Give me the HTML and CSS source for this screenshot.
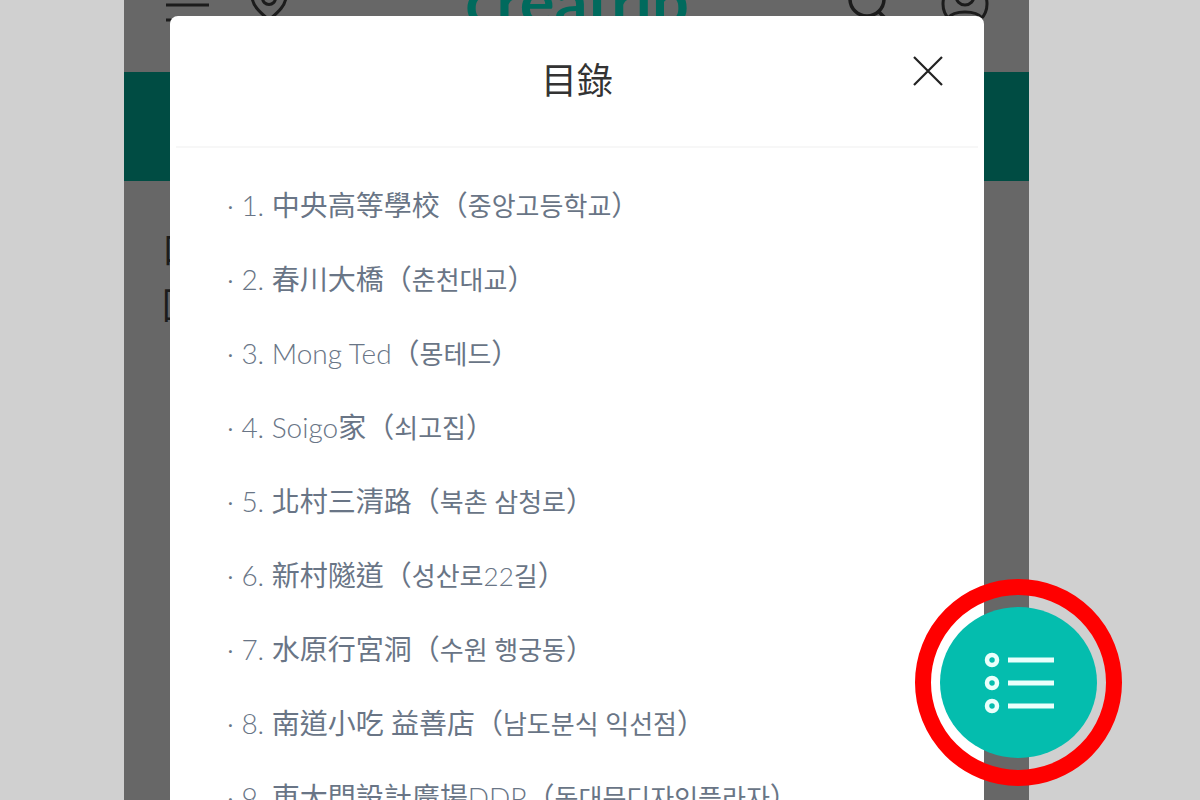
FILE: index.html
```html
<!DOCTYPE html>
<html lang="zh-Hant">
<head>
<meta charset="utf-8">
<meta name="viewport" content="width=device-width, initial-scale=1">
<title>目錄</title>
<link rel="stylesheet" href="styles.css">
</head>
<body>
<div class="stage">
  <main class="screen">
    <header class="topbar">
      <svg class="topbar-icon" viewBox="0 0 44 44" fill="none" stroke="#1c1c1c" stroke-width="3"><path d="M0 12H43M0 27H43M0 42H43"/></svg>
      <svg class="topbar-icon pin" viewBox="0 0 44 44" fill="none" stroke="#1c1c1c" stroke-width="3"><path d="M22 42C14 35 5 28 5 18C5 8 12 1 22 1S39 8 39 18C39 28 30 35 22 42Z"/><circle cx="22" cy="20" r="6.500"/></svg>
      <span class="logo">creatrip</span>
      <svg class="topbar-icon search" viewBox="0 0 44 44" fill="none" stroke="#1c1c1c" stroke-width="3.500"><circle cx="22" cy="21" r="17"/><path d="M33 33L42 42"/></svg>
      <svg class="topbar-icon user" viewBox="0 0 48 52" fill="none" stroke="#1c1c1c" stroke-width="3"><circle cx="24" cy="30" r="22"/><circle cx="24" cy="22" r="9"/><path d="M7 44C13 36 35 36 41 44"/></svg>
    </header>
    <div class="banner"></div>
    <div class="article"><p>口</p><p>回</p></div>

    <section class="modal" role="dialog" aria-labelledby="toc-title">
      <div class="modal-head">
        <h1 class="modal-title" id="toc-title">目錄</h1>
        <button class="close" type="button" aria-label="關閉">
          <svg viewBox="0 0 30 30" fill="none" stroke="#222" stroke-width="2.200"><path d="M1 1L29 29M29 1L1 29"/></svg>
        </button>
      </div>
      <ul class="toc">
        <li><span class="latin">· 1. </span>中央高等學校（<span class="ko" lang="ko">중앙고등학교</span>）</li>
        <li><span class="latin">· 2. </span>春川大橋（<span class="ko" lang="ko">춘천대교</span>）</li>
        <li><span class="latin">· 3. Mong Ted</span>（<span class="ko" lang="ko">몽테드</span>）</li>
        <li><span class="latin">· 4. Soigo</span>家（<span class="ko" lang="ko">쇠고집</span>）</li>
        <li><span class="latin">· 5. </span>北村三清路（<span class="ko" lang="ko">북촌 삼청로</span>）</li>
        <li><span class="latin">· 6. </span>新村隧道（<span class="ko" lang="ko">성산로<span class="latin">22</span>길</span>）</li>
        <li><span class="latin">· 7. </span>水原行宮洞（<span class="ko" lang="ko">수원 행궁동</span>）</li>
        <li><span class="latin">· 8. </span>南道小吃 益善店（<span class="ko" lang="ko">남도분식 익선점</span>）</li>
        <li><span class="latin">· 9. </span>東大門設計廣場<span class="latin">DDP</span>（<span class="ko" lang="ko">동대문디자인플라자</span>）</li>
      </ul>
    </section>
  </main>

  <div class="ring">
    <button class="fab" type="button" aria-label="目錄">
      <svg viewBox="0 0 72 64" fill="none" stroke="#eafffb"><g stroke-width="4.500"><circle cx="9" cy="9" r="5"/><circle cx="9" cy="32" r="5"/><circle cx="9" cy="55" r="5"/></g><path stroke-width="5" d="M25 9H71M25 32H71M25 55H71"/></svg>
    </button>
  </div>
</div>
</body>
</html>
```
FILE: styles.css
```css
* {
  box-sizing: border-box;
}

body {
  margin: 0;
  background: #d0d0d0;
  font-family: Lato, "Noto Sans CJK TC", sans-serif;
}

.stage {
  display: flow-root;
  position: relative;
  height: 100vh;
  padding: 0 171px 0 124px;
  overflow: hidden;
}

.screen {
  display: flow-root;
  position: relative;
  height: 100%;
  background: #676767;
}

.topbar {
  display: flex;
  align-items: center;
  height: 144px;
  margin-top: -72px;
  padding: 0 40px 0 42px;
}

.topbar-icon {
  flex: none;
  width: 44px;
  height: 44px;
}

.pin {
  margin-left: 37px;
}

.user {
  width: 48px;
  height: 52px;
  margin-left: 52px;
}

.logo {
  flex: 1;
  padding-left: 18px;
  color: #006a5d;
  font-size: 65px;
  font-weight: 700;
  line-height: 64px;
  text-align: center;
}

.banner {
  height: 109px;
  background: #004c43;
}

.article {
  padding: 40px 38px;
  color: #1c1c1c;
  font-size: 36px;
  line-height: 56px;
}

.article p {
  margin: 0;
}

.modal {
  position: absolute;
  top: 16px;
  right: 45px;
  left: 46px;
  bottom: 0;
  overflow: hidden;
  border-radius: 8px 8px 0 0;
  background: #fff;
}

.modal-head {
  display: grid;
  grid-template-columns: 1fr auto 1fr;
  align-items: center;
  height: 132px;
  margin: 0 6px;
  padding: 0 35px;
  border-bottom: 2px solid #f7f7f7;
}

.modal-title {
  grid-column: 2;
  margin: 0 0 6px;
  color: #333;
  font-size: 36px;
  font-weight: 400;
}

.close {
  justify-self: end;
  width: 30px;
  height: 30px;
  margin-bottom: 20px;
  padding: 0;
  border: 0;
  background: none;
}

.close svg {
  display: block;
}

.toc {
  margin: 0;
  padding: 20px 57px;
  list-style: none;
  color: #697586;
  font-size: 28px;
  line-height: 74px;
  white-space: nowrap;
}

.latin {
  font-weight: 300;
}

.ko {
  font-family: Lato, "Noto Sans CJK KR", sans-serif;
  font-size: 26px;
  line-height: 1;
}

.ring {
  position: absolute;
  right: 78px;
  bottom: 14px;
  display: grid;
  place-items: center;
  width: 207px;
  height: 207px;
  border: 16px solid #f00;
  border-radius: 50%;
}

.fab {
  display: grid;
  place-items: center;
  width: 157px;
  height: 151px;
  padding: 0;
  border: 0;
  border-radius: 50%;
  background: #04bdae;
}

.fab svg {
  width: 72px;
  height: 64px;
}
```
